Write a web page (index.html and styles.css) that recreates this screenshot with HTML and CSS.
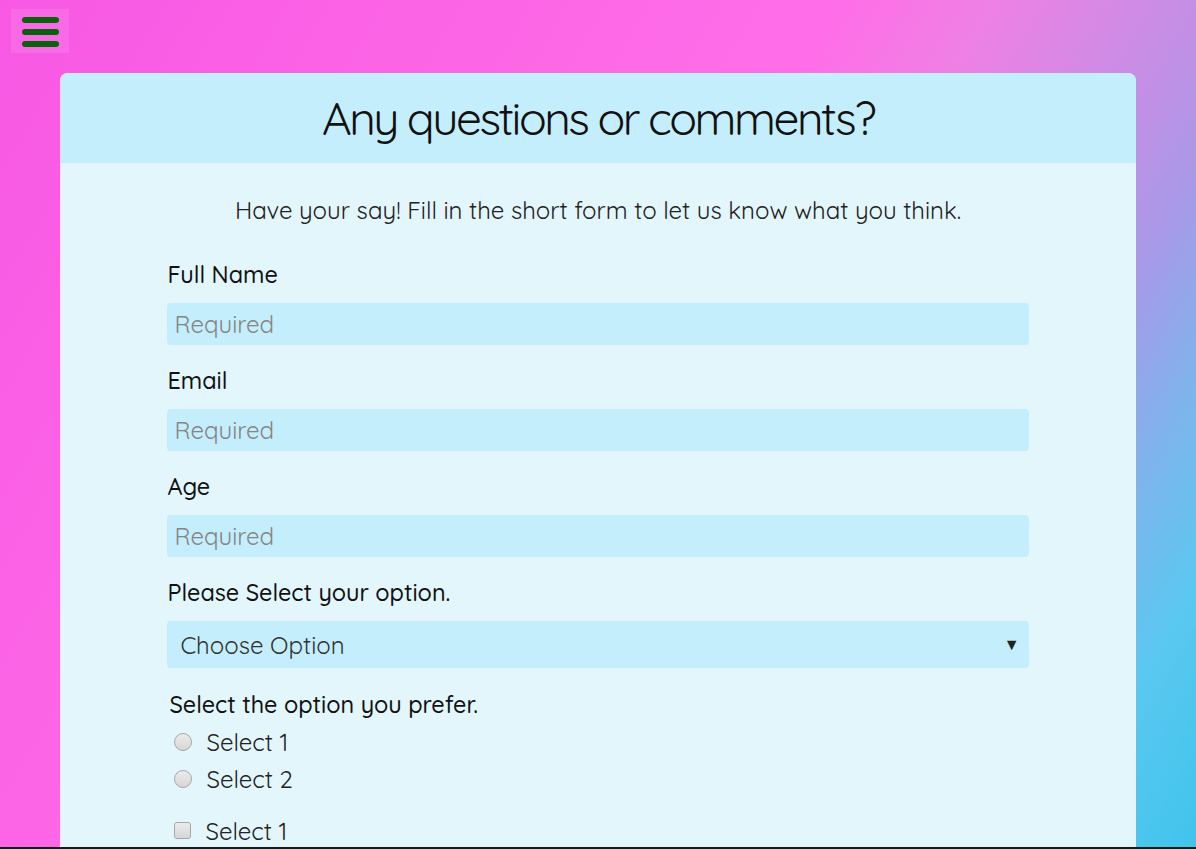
FILE: index.html
```html
<!DOCTYPE html>
<html lang="en">
<head>
<meta charset="utf-8">
<title>Any questions or comments?</title>
<link rel="stylesheet" href="styles.css">
</head>
<body>
<div class="topbar">
  <button class="menu-btn" aria-label="Menu">
    <span class="bar"></span><span class="bar"></span><span class="bar"></span>
  </button>
</div>
<main class="card">
  <header class="card-head">
    <h1 class="title">Any questions or comments?</h1>
  </header>
  <p class="intro">Have your say! Fill in the short form to let us know what you think.</p>
  <form class="form">
    <label class="field-label" for="name">Full Name</label>
    <input class="text-input" id="name" type="text" placeholder="Required">
    <label class="field-label" for="email">Email</label>
    <input class="text-input" id="email" type="email" placeholder="Required">
    <label class="field-label" for="age">Age</label>
    <input class="text-input" id="age" type="text" placeholder="Required">
    <label class="field-label" for="opt">Please Select your option.</label>
    <div class="select-wrap">
      <select class="select" id="opt">
        <option>Choose Option</option>
      </select>
      <span class="caret">&#9660;</span>
    </div>
    <p class="group-label">Select the option you prefer.</p>
    <label class="choice"><input class="radio" type="radio" name="pref"><span>Select 1</span></label>
    <label class="choice"><input class="radio" type="radio" name="pref"><span>Select 2</span></label>
    <label class="choice choice-check"><input class="check" type="checkbox"><span>Select 1</span></label>
  </form>
</main>
<div class="frame-edge"></div>
</body>
</html>
```
FILE: styles.css
```css
* { box-sizing: border-box; }
html, body { margin: 0; padding: 0; }
body {
  min-height: 100vh;
  font-family: "Quicksand", Lato, "Noto Sans", sans-serif;
  color: #111;
  background: linear-gradient(120deg,
    #f858e4 0%, #fc66e6 30%, #ff6ee8 50%, #ee80e4 59%,
    #c48fe6 71%, #a89ae8 77%, #7eb4ec 84%, #5ac8f0 91%, #40c4ec 100%);
  background-attachment: fixed;
  overflow: hidden;
}
.topbar {
  height: 53px;
  padding: 9px 0 0 11px;
}
.menu-btn {
  width: 58px;
  height: 44px;
  border: 0;
  margin: 0;
  padding: 8px 0 0 11px;
  background: rgba(255, 255, 255, 0.1);
  display: flex;
  flex-direction: column;
  gap: 6px;
  cursor: pointer;
}
.bar {
  display: block;
  width: 37px;
  height: 6px;
  border-radius: 3px;
  background: #0b610b;
}
.card {
  width: 90%;
  margin: 20px auto 0;
  background: #e2f6fc;
  border-radius: 8px 8px 0 0;
  min-height: 800px;
  overflow: hidden;
}
.card-head {
  background: #c4eefc;
  height: 90px;
  display: flex;
  align-items: center;
  justify-content: center;
}
.title {
  margin: 0;
  font-weight: 400;
  font-size: 46px;
  letter-spacing: -2.5px;
  color: #111;
}
.intro {
  margin: 34px 0 0;
  text-align: center;
  font-size: 24px;
  line-height: 26px;
  color: #222;
}
.form {
  width: 80%;
  margin: 39px auto 0;
  display: flex;
  flex-direction: column;
}
.field-label {
  display: block;
  font-size: 23.4px;
  line-height: 26px;
  font-weight: 500;
  margin: 0 0 15px;
  color: #111;
}
.text-input {
  height: 42px;
  border: 0;
  border-radius: 4px;
  background: #c4eefc;
  padding: 0 7px;
  font-family: inherit;
  font-size: 24px;
  color: #222;
  margin: 0 0 23px;
  outline: none;
}
.text-input::placeholder { color: #858585; }
.select-wrap {
  position: relative;
  height: 47px;
}
.select {
  width: 100%;
  height: 47px;
  border: 0;
  border-radius: 4px;
  background: #c4eefc;
  padding: 0 13px;
  font-family: inherit;
  font-size: 24px;
  color: #333;
  appearance: none;
  -webkit-appearance: none;
}
.caret {
  position: absolute;
  right: 9px;
  top: 13px;
  font-size: 16px;
  color: #222;
  pointer-events: none;
}
.group-label {
  margin: 24px 0 5px 2px;
  font-size: 23.4px;
  line-height: 26px;
  font-weight: 500;
  color: #111;
}
.choice {
  display: flex;
  align-items: center;
  gap: 14px;
  height: 37px;
  padding-left: 7px;
  font-size: 24px;
  color: #222;
}
.choice-check { margin-top: 15px; }
.radio, .check {
  appearance: none;
  -webkit-appearance: none;
  margin: 0;
  width: 18px;
  height: 18px;
  border: 1px solid #a8a8a8;
  background: linear-gradient(#ececec, #d6d6d6);
}
.radio { border-radius: 50%; }
.check { border-radius: 3px; width: 17px; height: 17px; }
.frame-edge {
  position: fixed;
  left: 0;
  right: 0;
  bottom: 0;
  height: 2px;
  background: #1a1a1a;
}
```
